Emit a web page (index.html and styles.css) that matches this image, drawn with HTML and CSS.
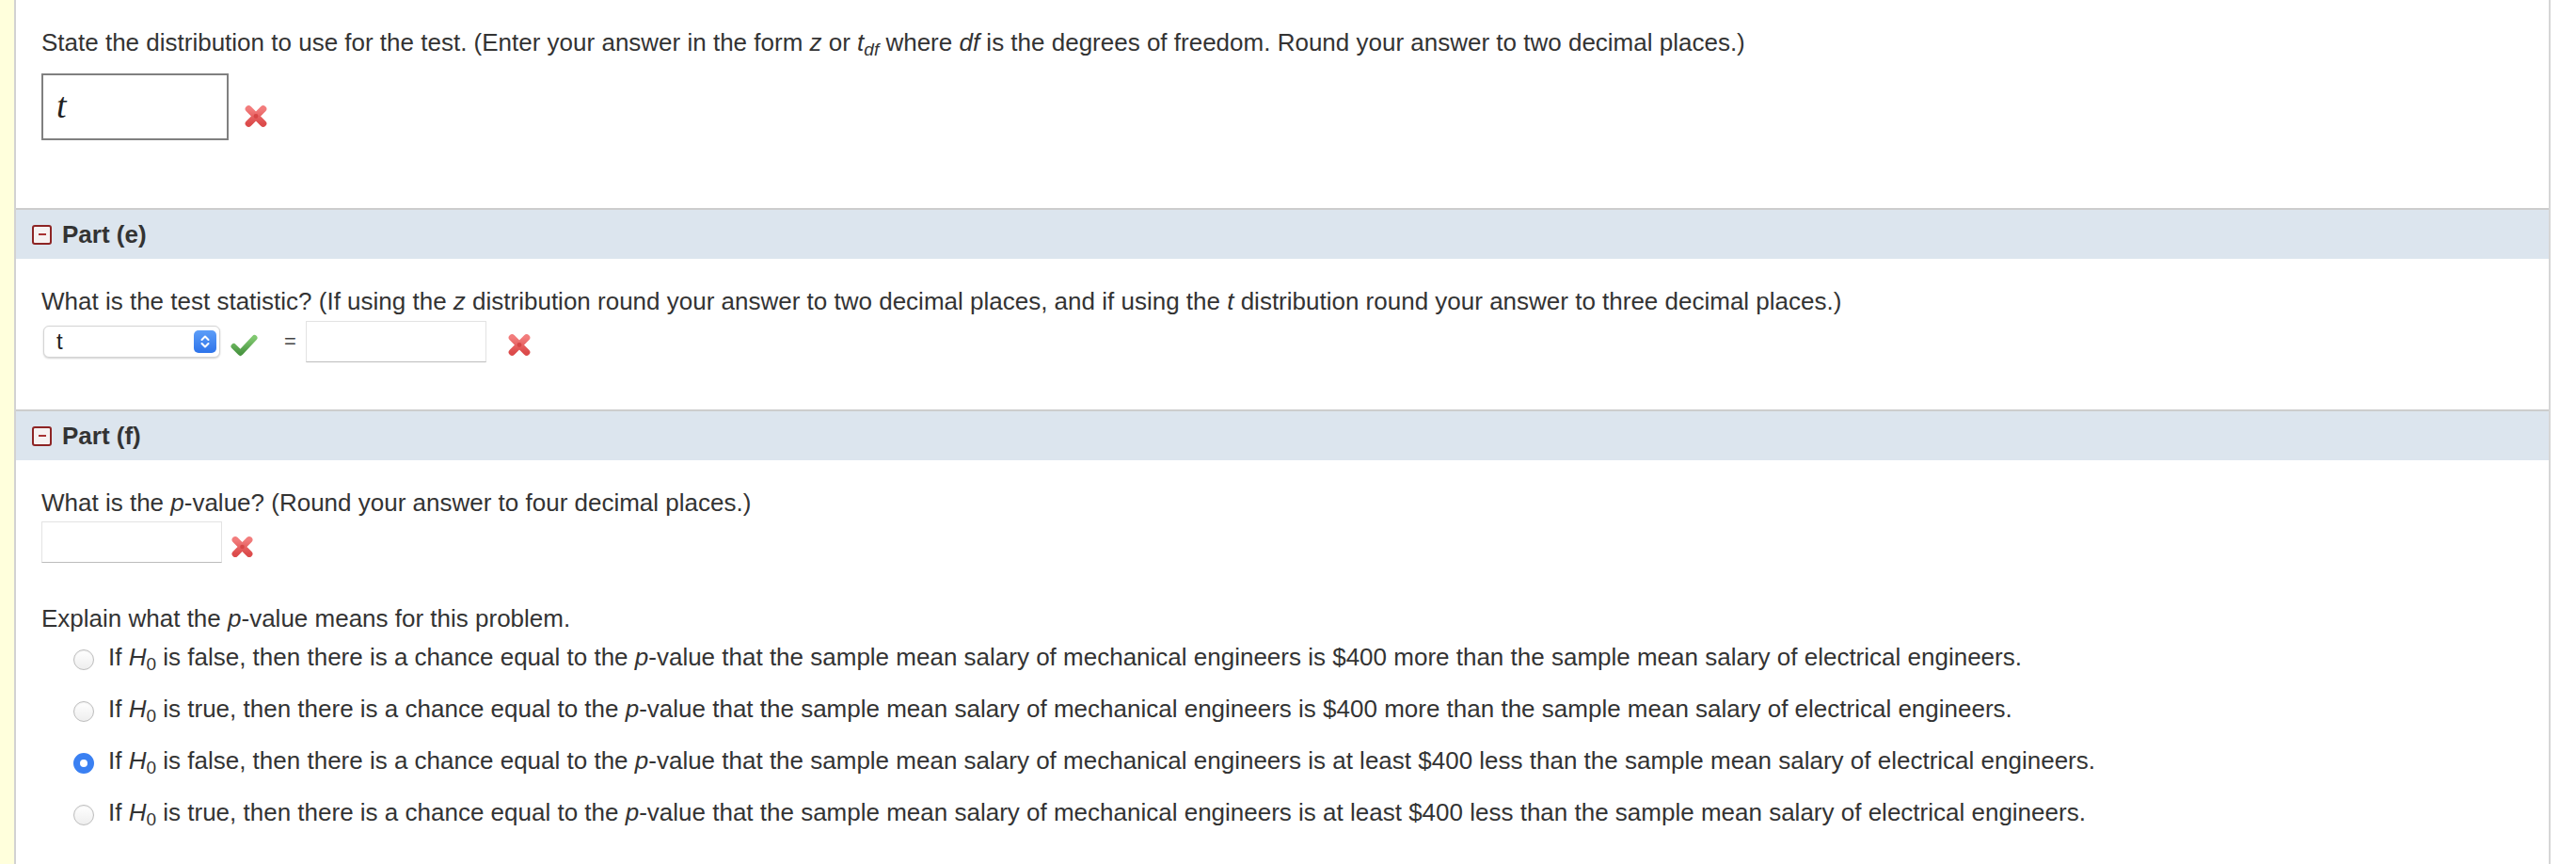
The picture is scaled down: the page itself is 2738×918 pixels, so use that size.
FILE: index.html
```html
<!DOCTYPE html>
<html lang="en">
<head>
<meta charset="utf-8">
<title>Hypothesis test</title>
<link rel="stylesheet" href="styles.css">
</head>
<body>
<div class="page">
  <div class="strip"></div>
  <div class="main">
    <section class="part part-d">
      <p class="q">State the distribution to use for the test. (Enter your answer in the form <i>z</i> or <i>t</i><sub class="sub-i">df</sub> where <i>df</i> is the degrees of freedom. Round your answer to two decimal places.)</p>
      <div class="row row-d">
        <div class="math-box"><i>t</i></div>
        <svg class="icon-x icon-x-d" viewBox="0 0 28 28" width="28" height="27"><defs><linearGradient id="xg1" x1="0" y1="0" x2="0" y2="1"><stop offset="0" stop-color="#f27c7c"/><stop offset="1" stop-color="#dc4b4b"/></linearGradient></defs><path d="M6 6 L22 22 M22 6 L6 22" stroke="url(#xg1)" stroke-width="7.5" stroke-linecap="round"/><circle cx="14" cy="14" r="2.5" fill="#d64646"/></svg>
      </div>
    </section>

    <div class="part-head"><span class="toggle"><span class="dash"></span></span><span>Part (e)</span></div>
    <section class="part part-e">
      <p class="q">What is the test statistic? (If using the <i>z</i> distribution round your answer to two decimal places, and if using the <i>t</i> distribution round your answer to three decimal places.)</p>
      <div class="row row-e">
        <div class="select"><span class="select-val">t</span><span class="stepper"><svg viewBox="0 0 24 24" width="24" height="24"><path d="M8.5 10 L12 6.5 L15.5 10 M8.5 14 L12 17.5 L15.5 14" fill="none" stroke="#fff" stroke-width="2" stroke-linecap="round" stroke-linejoin="round"/></svg></span></div>
        <svg class="icon-check" viewBox="0 0 30 24" width="31" height="24"><defs><linearGradient id="cg" x1="0" y1="0" x2="0" y2="1"><stop offset="0" stop-color="#80c870"/><stop offset="1" stop-color="#4a9642"/></linearGradient></defs><path d="M4 13 L11 20 L26 4" fill="none" stroke="url(#cg)" stroke-width="6" stroke-linecap="round" stroke-linejoin="round"/></svg>
        <span class="eq">=</span>
        <div class="text-input"></div>
        <svg class="icon-x icon-x-e" viewBox="0 0 28 28" width="28" height="27"><defs><linearGradient id="xg2" x1="0" y1="0" x2="0" y2="1"><stop offset="0" stop-color="#f27c7c"/><stop offset="1" stop-color="#dc4b4b"/></linearGradient></defs><path d="M6 6 L22 22 M22 6 L6 22" stroke="url(#xg2)" stroke-width="7.5" stroke-linecap="round"/><circle cx="14" cy="14" r="2.5" fill="#d64646"/></svg>
      </div>
    </section>

    <div class="part-head"><span class="toggle"><span class="dash"></span></span><span>Part (f)</span></div>
    <section class="part part-f">
      <p class="q">What is the <i>p</i>-value? (Round your answer to four decimal places.)</p>
      <div class="row row-f">
        <div class="text-input"></div>
        <svg class="icon-x icon-x-f" viewBox="0 0 28 28" width="27" height="26"><defs><linearGradient id="xg3" x1="0" y1="0" x2="0" y2="1"><stop offset="0" stop-color="#f27c7c"/><stop offset="1" stop-color="#dc4b4b"/></linearGradient></defs><path d="M6 6 L22 22 M22 6 L6 22" stroke="url(#xg3)" stroke-width="7.5" stroke-linecap="round"/><circle cx="14" cy="14" r="2.5" fill="#d64646"/></svg>
      </div>
      <p class="q explain">Explain what the <i>p</i>-value means for this problem.</p>
      <ul class="options">
        <li class="opt"><span class="radio"></span><span>If <i>H</i><sub>0</sub> is false, then there is a chance equal to the <i>p</i>-value that the sample mean salary of mechanical engineers is $400 more than the sample mean salary of electrical engineers.</span></li>
        <li class="opt"><span class="radio"></span><span>If <i>H</i><sub>0</sub> is true, then there is a chance equal to the <i>p</i>-value that the sample mean salary of mechanical engineers is $400 more than the sample mean salary of electrical engineers.</span></li>
        <li class="opt"><span class="radio checked"></span><span>If <i>H</i><sub>0</sub> is false, then there is a chance equal to the <i>p</i>-value that the sample mean salary of mechanical engineers is at least $400 less than the sample mean salary of electrical engineers.</span></li>
        <li class="opt"><span class="radio"></span><span>If <i>H</i><sub>0</sub> is true, then there is a chance equal to the <i>p</i>-value that the sample mean salary of mechanical engineers is at least $400 less than the sample mean salary of electrical engineers.</span></li>
      </ul>
    </section>
  </div>
</div>
</body>
</html>
```
FILE: styles.css
```css
html, body {
  margin: 0;
  padding: 0;
  background: #fff;
}

body {
  font-family: "Liberation Sans", Arial, Helvetica, sans-serif;
  font-size: 26px;
  line-height: 30px;
  color: #333;
}

.page {
  display: flex;
  min-height: 918px;
}

.strip {
  flex: none;
  width: 15px;
  background: #ffffdc;
  border-right: 2px solid #d2d2d2;
}

.main {
  flex: none;
  width: 2692px;
  border-right: 2px solid #d6d6d6;
}

.q {
  margin: 0;
  white-space: nowrap;
}

sub {
  font-size: 19px;
  line-height: 0;
  vertical-align: -5px;
}

.sub-i {
  font-style: italic;
}

.row {
  display: flex;
  align-items: center;
}

/* Part (d) remainder */
.part-d {
  padding: 30px 0 72px 27px;
}

.row-d {
  margin-top: 18px;
  align-items: flex-end;
}

.math-box {
  box-sizing: border-box;
  width: 199px;
  height: 71px;
  border: 2px solid #808080;
  padding: 10px 0 0 14px;
  font-family: "Liberation Serif", "Times New Roman", serif;
  font-size: 38px;
  line-height: 44px;
  color: #222;
}

.icon-x {
  flex: none;
  display: block;
}

.icon-x-d {
  margin-left: 15px;
  margin-bottom: 12px;
}

/* Part header bands */
.part-head {
  display: flex;
  align-items: center;
  gap: 11px;
  height: 52px;
  border-top: 2px solid #cdcdcd;
  background: #dce5ee;
  padding-left: 17px;
  font-weight: bold;
  color: #333;
}

.toggle {
  box-sizing: border-box;
  width: 21px;
  height: 21px;
  border: 2px solid #8d2424;
  border-radius: 3px;
  background: #f6f2f2;
  display: flex;
  align-items: center;
  justify-content: center;
}

.dash {
  width: 8px;
  height: 2px;
  background: #a83232;
}

/* Part (e) */
.part-e {
  padding: 30px 0 50px 27px;
}

.row-e {
  margin-top: 6px;
  height: 44px;
}

.select {
  box-sizing: border-box;
  margin-left: 2px;
  width: 188px;
  height: 34px;
  border: 1px solid #d4d4d4;
  border-radius: 6px;
  background: #fff;
  box-shadow: 0 1px 2px rgba(0, 0, 0, 0.18);
  display: flex;
  align-items: center;
  justify-content: space-between;
  padding: 0 3px 0 13px;
}

.select-val {
  font-size: 24px;
  color: #222;
}

.stepper {
  width: 24px;
  height: 24px;
  border-radius: 5px;
  background: linear-gradient(#5d9ef8, #2d73ea);
  display: block;
}

.stepper svg {
  display: block;
}

.icon-check {
  flex: none;
  display: block;
  margin-left: 10px;
  margin-top: 8px;
}

.eq {
  margin-left: 27px;
  font-size: 22px;
  color: #444;
}

.text-input {
  box-sizing: border-box;
  width: 192px;
  height: 44px;
  border: 1px solid #e3e3e3;
  border-bottom-color: #bcbcbc;
  background: #fff;
}

.row-e .text-input {
  margin-left: 10px;
}

.icon-x-e {
  margin-left: 21px;
  margin-top: 6px;
}

/* Part (f) */
.part-f {
  padding: 30px 0 0 27px;
}

.row-f {
  margin-top: 5px;
}

.icon-x-f {
  margin-left: 8px;
  margin-top: 10px;
}

.explain {
  margin-top: 44px;
}

.options {
  list-style: none;
  margin: 11px 0 0;
  padding: 0 0 0 34px;
}

.opt {
  display: flex;
  align-items: center;
  gap: 15px;
  height: 30px;
  margin-bottom: 25px;
  white-space: nowrap;
}

.radio {
  flex: none;
  box-sizing: border-box;
  width: 22px;
  height: 22px;
  margin-top: 6px;
  border-radius: 50%;
  border: 1px solid #bdbdbd;
  background: linear-gradient(#ffffff, #eeeeee);
  box-shadow: inset 0 1px 1px rgba(0, 0, 0, 0.06);
}

.radio.checked {
  border: 7px solid #3a80f2;
  background: #fff;
  box-shadow: none;
}
```
